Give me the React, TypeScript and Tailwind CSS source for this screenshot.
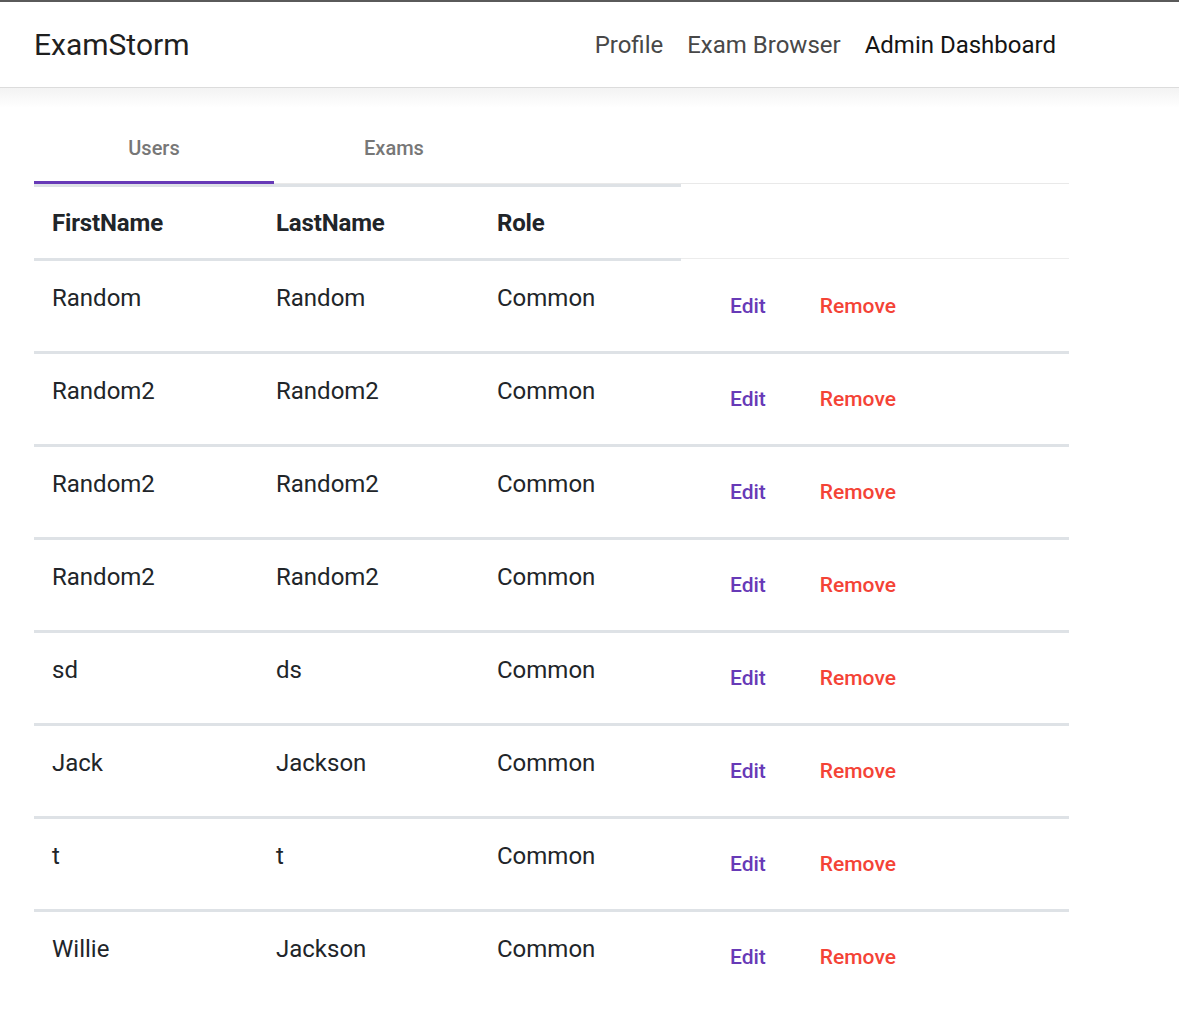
import React from "react";

const users = [
  ["Random", "Random", "Common"],
  ["Random2", "Random2", "Common"],
  ["Random2", "Random2", "Common"],
  ["Random2", "Random2", "Common"],
  ["sd", "ds", "Common"],
  ["Jack", "Jackson", "Common"],
  ["t", "t", "Common"],
  ["Willie", "Jackson", "Common"],
];

export default function App() {
  return (
    <div className="min-h-[1029px] bg-white font-['Roboto',sans-serif] text-[#212529]">
      <header className="border-t-2 border-b border-t-[#5a5a5a] border-b-[#dcdcdc] bg-white">
        <div className="flex h-[85px] w-[1069px] items-center justify-between pl-[34px]">
          <div className="text-[30px] leading-none text-[#1f1f1f]">ExamStorm</div>
          <nav className="flex items-center gap-[24px] pr-[13px] text-[24px] leading-none">
            <a className="text-[#484848]">Profile</a>
            <a className="text-[#484848]">Exam Browser</a>
            <a className="text-[#141414]">Admin Dashboard</a>
          </nav>
        </div>
      </header>
      <div className="h-[20px] bg-gradient-to-b from-[#f3f3f3] to-white" />
      <main className="pl-[34px] pt-[3px]">
        <div className="w-[1035px]">
          <div className="flex h-[73px] border-b border-[#e9e9e9]">
            <div className="relative flex w-[240px] items-center justify-center pt-[2px] text-[20px] font-medium text-[#777777]">
              Users
              <span className="absolute -bottom-px left-0 h-[3px] w-full bg-[#673ab7]" />
            </div>
            <div className="flex w-[240px] items-center justify-center pt-[2px] text-[20px] font-medium text-[#777777]">
              Exams
            </div>
          </div>
          <div className="grid grid-cols-[224px_221px_202px_1fr]">
            <div className="border-y-[3px] border-[#dee2e6] px-[18px] pb-[17px] pt-[18px] text-[24px] font-bold leading-[36px] tracking-[-0.15px]">
              FirstName
            </div>
            <div className="border-y-[3px] border-[#dee2e6] px-[18px] pb-[17px] pt-[18px] text-[24px] font-bold leading-[36px] tracking-[-0.15px]">
              LastName
            </div>
            <div className="border-y-[3px] border-[#dee2e6] px-[18px] pb-[17px] pt-[18px] text-[24px] font-bold leading-[36px] tracking-[-0.15px]">
              Role
            </div>
            <div className="mb-[2px] border-b border-[#ececec]" />
          </div>
          {users.map((u, i) => (
            <div
              key={i}
              className={
                i < users.length - 1
                  ? "grid h-[93px] grid-cols-[224px_221px_202px_1fr] border-b-[3px] border-[#dee2e6]"
                  : "grid h-[93px] grid-cols-[224px_221px_202px_1fr]"
              }
            >
              <div className="px-[18px] pt-[19px] text-[24px] leading-[36px]">{u[0]}</div>
              <div className="px-[18px] pt-[19px] text-[24px] leading-[36px]">{u[1]}</div>
              <div className="px-[18px] pt-[19px] text-[24px] leading-[36px]">{u[2]}</div>
              <div className="flex items-start gap-[6px] pl-[25px] pt-[18px]">
                <button className="h-[54px] px-[24px] text-[21px] font-medium leading-[54px] text-[#673ab7]">
                  Edit
                </button>
                <button className="h-[54px] px-[24px] text-[21px] font-medium leading-[54px] text-[#f44336]">
                  Remove
                </button>
              </div>
            </div>
          ))}
        </div>
      </main>
    </div>
  );
}
